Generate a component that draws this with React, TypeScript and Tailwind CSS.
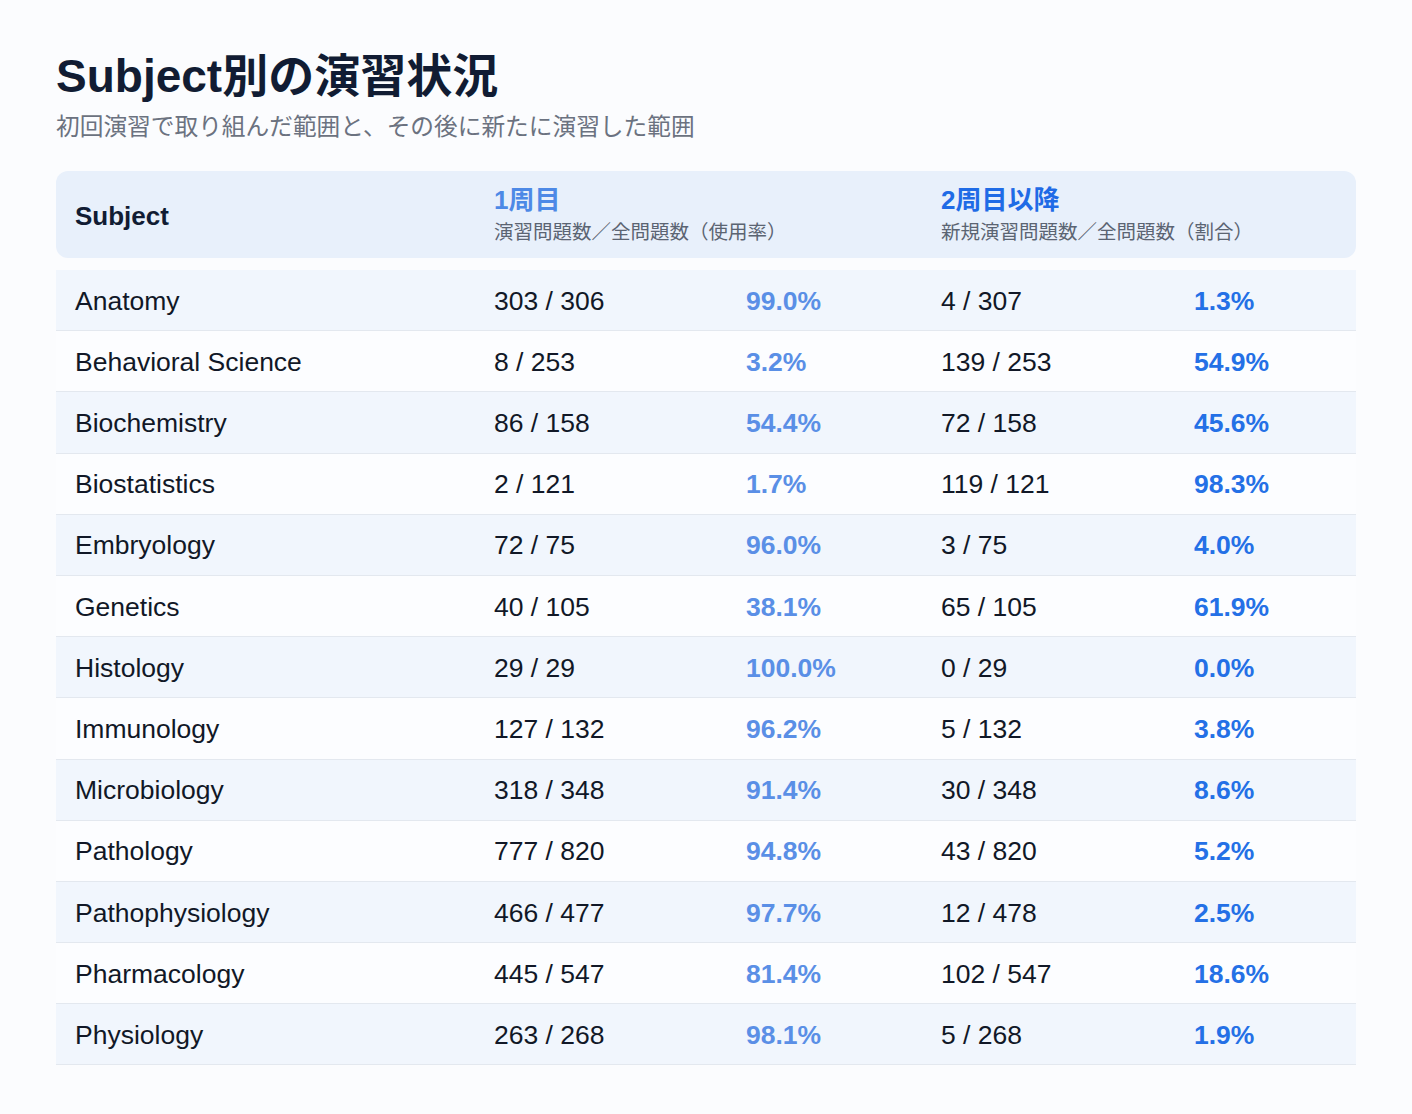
const rows: [string, string, string, string, string][] = [
  ["Anatomy", "303 / 306", "99.0%", "4 / 307", "1.3%"],
  ["Behavioral Science", "8 / 253", "3.2%", "139 / 253", "54.9%"],
  ["Biochemistry", "86 / 158", "54.4%", "72 / 158", "45.6%"],
  ["Biostatistics", "2 / 121", "1.7%", "119 / 121", "98.3%"],
  ["Embryology", "72 / 75", "96.0%", "3 / 75", "4.0%"],
  ["Genetics", "40 / 105", "38.1%", "65 / 105", "61.9%"],
  ["Histology", "29 / 29", "100.0%", "0 / 29", "0.0%"],
  ["Immunology", "127 / 132", "96.2%", "5 / 132", "3.8%"],
  ["Microbiology", "318 / 348", "91.4%", "30 / 348", "8.6%"],
  ["Pathology", "777 / 820", "94.8%", "43 / 820", "5.2%"],
  ["Pathophysiology", "466 / 477", "97.7%", "12 / 478", "2.5%"],
  ["Pharmacology", "445 / 547", "81.4%", "102 / 547", "18.6%"],
  ["Physiology", "263 / 268", "98.1%", "5 / 268", "1.9%"],
];

const font = "font-['Liberation_Sans','Noto_Sans_CJK_JP',sans-serif]";
const cols = "grid grid-cols-[419px_252px_195px_253px_1fr]";

export default function App() {
  return (
    <div className={`min-h-[1114px] w-full bg-[#fbfcfe] px-[56px] pt-[46px] ${font}`}>
      <h1 className="text-[46px] font-bold leading-[60px] text-[#111c33]">Subject別の演習状況</h1>
      <p className="mt-[5px] text-[23.7px] leading-[32px] text-[#6b7280]">
        初回演習で取り組んだ範囲と、その後に新たに演習した範囲
      </p>

      <div className={`${cols} mt-[28px] h-[87px] items-center rounded-[12px] bg-[#e8f0fb]`}>
        <div className="pl-[19px] pt-[3px] text-[26px] font-bold text-[#111c33]">Subject</div>
        <div className="col-span-2 pl-[19px]">
          <div className="text-[26px] font-bold leading-[30px] text-[#4d89e6]">1周目</div>
          <div className="mt-[5px] text-[19.5px] leading-[24px] text-[#5b6472]">演習問題数／全問題数（使用率）</div>
        </div>
        <div className="col-span-2 pl-[19px]">
          <div className="text-[26px] font-bold leading-[30px] text-[#1f6be6]">2周目以降</div>
          <div className="mt-[5px] text-[19.5px] leading-[24px] text-[#5b6472]">新規演習問題数／全問題数（割合）</div>
        </div>
      </div>

      <div className="mt-[12px]">
        {rows.map((r, i) => (
          <div
            key={r[0]}
            className={`${cols} h-[61.2px] items-center border-b border-[#e3e8ef] pt-[3px] text-[26.5px] text-[#111827] ${
              i % 2 === 0 ? "bg-[#f1f6fd]" : "bg-[#fcfdff]"
            }`}
          >
            <div className="pl-[19px]">{r[0]}</div>
            <div className="pl-[19px]">{r[1]}</div>
            <div className="pl-[19px] font-bold text-[#5a8fe6]">{r[2]}</div>
            <div className="pl-[19px]">{r[3]}</div>
            <div className="pl-[19px] font-bold text-[#2470e6]">{r[4]}</div>
          </div>
        ))}
      </div>
    </div>
  );
}
